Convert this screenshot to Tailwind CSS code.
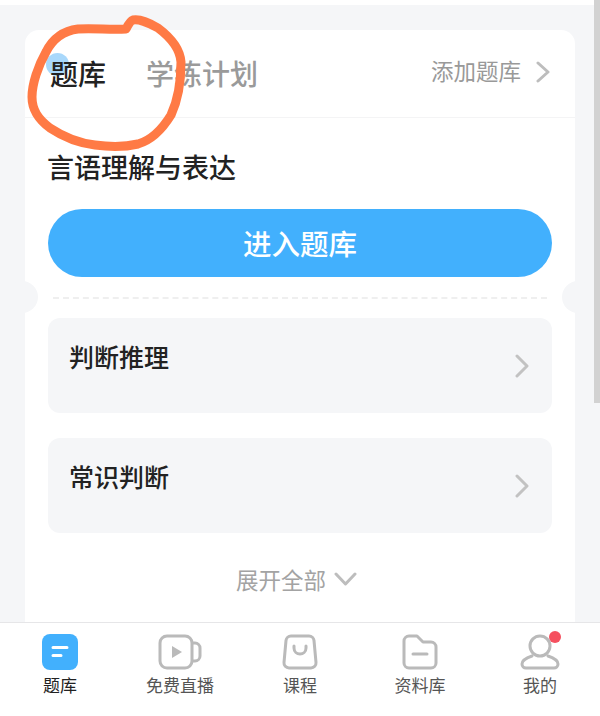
<!DOCTYPE html>
<html lang="zh">
<head>
  <meta charset="UTF-8" />
  <title>题库</title>
  <script src="https://cdn.jsdelivr.net/npm/@tailwindcss/browser@4"></script>
</head>
<body class="bg-[#f5f6f8]">
  <div class="relative w-[600px] h-[716px] overflow-hidden flex flex-col font-['Noto_Sans_CJK_SC','Noto_Sans',sans-serif] bg-[#f5f6f8]">
    <div class="h-[5px] bg-white shrink-0"></div>

    <!-- Card -->
    <main class="flex-1 min-h-0 mt-[25px] mx-[25px] bg-white rounded-t-[14px] flex flex-col relative">
      <header class="relative h-[88px] shrink-0 border-b border-[#f4f4f5] flex items-center pl-[25px] pr-[25px] pb-[1px]">
        <!-- tap ripple behind the active tab -->
        <div class="absolute left-[21px] top-[23px] w-[23px] h-[23px] rounded-full bg-[#a9d8fb]"></div>
        <span class="relative text-[28px] leading-none font-medium text-[#222]">题库</span>
        <span class="ml-[40px] text-[28px] leading-none font-medium text-[#9a9a9a]">学练计划</span>
        <span class="ml-auto mb-[5px] text-[22.5px] leading-none text-[#999]">添加题库</span>
        <svg class="ml-[15px] mb-[2px]" width="14" height="22" viewBox="0 0 14 22" fill="none" stroke="#bdbdbd" stroke-width="3" stroke-linecap="round" stroke-linejoin="round"><path d="M2 2l10 9-10 9"/></svg>
      </header>

      <section class="px-[23px] pt-[33px] pb-[20px]">
        <h2 class="-ml-[1px] text-[27px] leading-[32px] font-medium text-[#222]">言语理解与表达</h2>
        <button class="mt-[26px] w-full h-[68px] rounded-full bg-[#42b0fd] text-white text-[28.5px] font-medium flex items-center justify-center">进入题库</button>
      </section>

      <!-- Ticket divider -->
      <div class="relative h-0 mx-[28px] border-t-2 border-dashed border-[#efefef]"></div>
      <div class="absolute left-[-19px] top-[251px] w-8 h-8 rounded-full bg-[#f5f6f8]"></div>
      <div class="absolute right-[-19px] top-[251px] w-8 h-8 rounded-full bg-[#f5f6f8]"></div>

      <div class="px-[23px] pt-[19px] flex flex-col gap-[25px]">
        <div class="h-[95px] rounded-[12px] bg-[#f5f6f8] flex justify-between pl-[21px] pr-[23px]">
          <span class="mt-[22px] text-[25px] leading-[32px] font-medium text-[#222]">判断推理</span>
          <svg class="mt-[36px]" width="14" height="24" viewBox="0 0 14 24" fill="none" stroke="#c2c2c2" stroke-width="3" stroke-linecap="round" stroke-linejoin="round"><path d="M2 2l10 10L2 22"/></svg>
        </div>
        <div class="h-[95px] rounded-[12px] bg-[#f5f6f8] flex justify-between pl-[21px] pr-[23px]">
          <span class="mt-[22px] text-[25px] leading-[32px] font-medium text-[#222]">常识判断</span>
          <svg class="mt-[36px]" width="14" height="24" viewBox="0 0 14 24" fill="none" stroke="#c2c2c2" stroke-width="3" stroke-linecap="round" stroke-linejoin="round"><path d="M2 2l10 10L2 22"/></svg>
        </div>
      </div>

      <div class="mt-[31px] pr-[7px] flex items-center justify-center gap-[8px] text-[22.5px] leading-[30px] text-[#a3a3a3]">
        <span>展开全部</span>
        <svg width="23" height="15" viewBox="0 0 23 15" fill="none" stroke="#bdbdbd" stroke-width="3" stroke-linecap="round" stroke-linejoin="round"><path d="M2 2l9.500 10L21 2"/></svg>
      </div>
    </main>

    <!-- Bottom tab bar -->
    <nav class="h-[94px] shrink-0 bg-white border-t border-[#e6e6e8] grid grid-cols-5 text-[17px] leading-[22px] text-[#555]">
      <a class="flex flex-col items-center pt-[11px] text-[#222]">
        <svg width="36" height="36" viewBox="0 0 36 36"><rect width="36" height="36" rx="8" fill="#42b0fd"/><path d="M11 13.500h14M11 21.500h8" stroke="#fff" stroke-width="3" stroke-linecap="round"/></svg>
        <span class="mt-[4px]">题库</span>
      </a>
      <a class="flex flex-col items-center pt-[11px]">
        <svg width="44" height="36" viewBox="0 0 44 36" fill="none" stroke="#bababa" stroke-width="3" stroke-linejoin="round"><rect x="2" y="2" width="32" height="32" rx="7"/><path d="M34 9h3a5 5 0 0 1 5 5v8a5 5 0 0 1-5 5h-3"/><path d="M14 12l10 6-10 6z" fill="#bababa" stroke="none"/></svg>
        <span class="mt-[4px]">免费直播</span>
      </a>
      <a class="flex flex-col items-center pt-[11px]">
        <svg width="36" height="36" viewBox="0 0 36 36" fill="none" stroke="#bababa" stroke-width="3" stroke-linecap="round" stroke-linejoin="round"><path d="M9 2h18a5 5 0 0 1 5 4.500l2 22a5 5 0 0 1-5 5.500H7a5 5 0 0 1-5-5.500l2-22A5 5 0 0 1 9 2z"/><path d="M12 12v2c0 8 12 8 12 0v-2"/></svg>
        <span class="mt-[4px]">课程</span>
      </a>
      <a class="flex flex-col items-center pt-[11px]">
        <svg width="36" height="36" viewBox="0 0 36 36" fill="none" stroke="#bababa" stroke-width="3" stroke-linecap="round" stroke-linejoin="round"><path d="M2 7a5 5 0 0 1 5-5h8l6 6h8a5 5 0 0 1 5 5v16a5 5 0 0 1-5 5H7a5 5 0 0 1-5-5z"/><path d="M11 20h14"/></svg>
        <span class="mt-[4px]">资料库</span>
      </a>
      <a class="flex flex-col items-center pt-[11px]">
        <span class="relative h-[36px] w-[40px]">
          <svg width="40" height="36" viewBox="0 0 40 36" fill="none" stroke="#bababa" stroke-width="3" stroke-linecap="round" stroke-linejoin="round"><circle cx="20" cy="12" r="10"/><path d="M12 22C6 24 2 27 2 30a4 4 0 0 0 4 4h28a4 4 0 0 0 4-4c0-3-4-6-10-8"/></svg>
          <span class="absolute right-[-1px] top-[-3px] w-[12px] h-[12px] rounded-full bg-[#f5505f]"></span>
        </span>
        <span class="mt-[4px]">我的</span>
      </a>
    </nav>

    <!-- Scrollbar -->
    <div class="absolute right-0 top-0 w-[6px] h-[403px] bg-[#d2d2d2]"></div>

    <!-- Hand-drawn markup over the screenshot -->
    <svg class="absolute left-0 top-0" width="600" height="200" viewBox="0 0 600 200" fill="none" stroke="#ff7a45" stroke-width="9" stroke-linecap="round" stroke-linejoin="round"><path d="M126 29C110 30 95 28 78 29C62 31 52 40 46 52C38 66 32 84 32 97C32 110 38 119 50 128C62 136 78 143 95 145C110 147 125 147 138 144C152 140 163 128 171 115C178 100 181 82 181 62C180 48 170 37 158 28C148 22 138 19 133 20C130 21 128 25 126 29Z"/></svg>
  </div>
</body>
</html>
